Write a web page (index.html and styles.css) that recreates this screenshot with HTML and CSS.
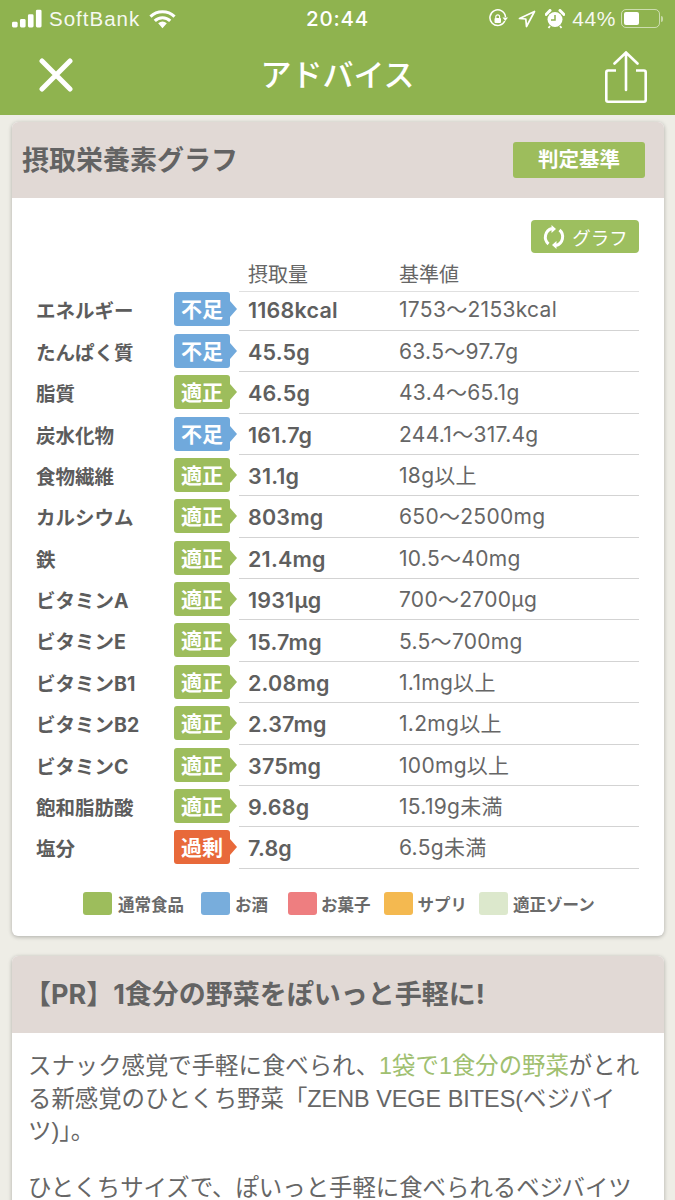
FILE: index.html
```html
<!DOCTYPE html>
<html lang="ja">
<head>
<meta charset="utf-8">
<title>アドバイス</title>
<link rel="stylesheet" href="styles.css">
</head>
<body>
<header class="appbar">
  <div class="status">
    <div class="status-left">
      <svg class="signal" width="30" height="20" viewBox="0 0 32 20"><rect x="0" y="13" width="6" height="6" rx="1.5"/><rect x="8.5" y="10" width="6" height="9" rx="1.5"/><rect x="17" y="5" width="6" height="14" rx="1.5"/><rect x="25.500" y="0" width="6" height="19" rx="1.5"/></svg>
      <span class="carrier">SoftBank</span>
      <svg class="wifi" width="27" height="20" viewBox="0 0 28 20"><path d="M1.500 7.500A18 18 0 0 1 26.500 7.500M6 12a11.500 11.500 0 0 1 16 0" fill="none" stroke="#fff" stroke-width="3.200"/><path d="M9.500 14.500a7 7 0 0 1 9 0L14 19.500z" fill="#fff"/></svg>
    </div>
    <span class="time">20:44</span>
    <div class="status-right">
      <svg width="20" height="20" viewBox="0 0 20 20"><path d="M16.800 12A7.800 7.800 0 1 1 17.500 8" fill="none" stroke="#fff" stroke-width="1.500"/><path d="M14.500 8.500h5.500L17.300 12z" fill="#fff"/><rect x="6.500" y="9" width="6.500" height="5" rx="1" fill="#fff"/><path d="M7.800 9.500V7.800a1.900 1.900 0 0 1 3.800 0v1.700" fill="none" stroke="#fff" stroke-width="1.200"/></svg>
      <svg class="gap-loc" width="18" height="20" viewBox="0 0 18 20"><path d="M16.500 2.500 8.500 17.500 7.800 10 1.500 9.500z" fill="none" stroke="#fff" stroke-width="1.700" stroke-linejoin="round"/></svg>
      <svg class="gap-alarm" width="20" height="20" viewBox="0 0 20 20"><circle cx="10" cy="10.500" r="7.500" fill="#fff"/><path d="M10 6v5H6" fill="none" stroke="#8fb34f" stroke-width="1.500"/><path d="M1 5.500 5 1.500M15 1.500l4 4" stroke="#fff" stroke-width="3" stroke-linecap="round"/><path d="M5 17l-1.500 2M15 17l1.500 2" stroke="#fff" stroke-width="1.800"/></svg>
      <span class="battery-text">44%</span>
      <div class="battery"><span class="battery-fill"></span></div><span class="battery-cap"></span>
    </div>
  </div>
  <div class="nav">
    <svg class="close" width="34" height="34" viewBox="0 0 34 34"><path d="M3 3 31 31M31 3 3 31" stroke="#fff" stroke-width="5" stroke-linecap="round"/></svg>
    <h1 class="title">アドバイス</h1>
    <svg class="share" width="42" height="52" viewBox="0 0 42 52"><path d="M11 19.500H3a1.700 1.700 0 0 0-1.700 1.700V49a1.700 1.700 0 0 0 1.700 1.700h36a1.700 1.700 0 0 0 1.700-1.700V21.200a1.700 1.700 0 0 0-1.700-1.700H31" fill="none" stroke="#fff" stroke-width="2.600"/><path d="M21 39V2M9.500 12.500 21 1.500 32.500 12.500" fill="none" stroke="#fff" stroke-width="2.600" stroke-linecap="round"/></svg>
  </div>
</header>

<main class="content">
  <section class="card">
    <div class="card-head">
      <h2 class="card-title">摂取栄養素グラフ</h2>
      <span class="criteria">判定基準</span>
    </div>
    <div class="graph-body">
      <div class="toggle-row">
        <span class="toggle">
          <svg width="24" height="24" viewBox="0 0 24 24"><path d="M10 3.500A9 9 0 0 0 6.500 19M14 20.500A9 9 0 0 0 17.500 5" fill="none" stroke="#fff" stroke-width="3"/><path d="M9.500 0v8L14 4zM14.500 24v-8L10 20z" fill="#fff"/></svg>
          グラフ
        </span>
      </div>
      <div class="col-heads">
        <span class="col-a">摂取量</span>
        <span class="col-b">基準値</span>
      </div>
      <div class="rows">
        <div class="row"><span class="name">エネルギー</span><span class="badge low">不足</span><div class="cell"><b class="val">1168kcal</b><span class="ref">1753～2153kcal</span></div></div>
        <div class="row"><span class="name">たんぱく質</span><span class="badge low">不足</span><div class="cell"><b class="val">45.5g</b><span class="ref">63.5～97.7g</span></div></div>
        <div class="row"><span class="name">脂質</span><span class="badge ok">適正</span><div class="cell"><b class="val">46.5g</b><span class="ref">43.4～65.1g</span></div></div>
        <div class="row"><span class="name">炭水化物</span><span class="badge low">不足</span><div class="cell"><b class="val">161.7g</b><span class="ref">244.1～317.4g</span></div></div>
        <div class="row"><span class="name">食物繊維</span><span class="badge ok">適正</span><div class="cell"><b class="val">31.1g</b><span class="ref">18g以上</span></div></div>
        <div class="row"><span class="name">カルシウム</span><span class="badge ok">適正</span><div class="cell"><b class="val">803mg</b><span class="ref">650～2500mg</span></div></div>
        <div class="row"><span class="name">鉄</span><span class="badge ok">適正</span><div class="cell"><b class="val">21.4mg</b><span class="ref">10.5～40mg</span></div></div>
        <div class="row"><span class="name">ビタミンA</span><span class="badge ok">適正</span><div class="cell"><b class="val">1931µg</b><span class="ref">700～2700µg</span></div></div>
        <div class="row"><span class="name">ビタミンE</span><span class="badge ok">適正</span><div class="cell"><b class="val">15.7mg</b><span class="ref">5.5～700mg</span></div></div>
        <div class="row"><span class="name">ビタミンB1</span><span class="badge ok">適正</span><div class="cell"><b class="val">2.08mg</b><span class="ref">1.1mg以上</span></div></div>
        <div class="row"><span class="name">ビタミンB2</span><span class="badge ok">適正</span><div class="cell"><b class="val">2.37mg</b><span class="ref">1.2mg以上</span></div></div>
        <div class="row"><span class="name">ビタミンC</span><span class="badge ok">適正</span><div class="cell"><b class="val">375mg</b><span class="ref">100mg以上</span></div></div>
        <div class="row"><span class="name">飽和脂肪酸</span><span class="badge ok">適正</span><div class="cell"><b class="val">9.68g</b><span class="ref">15.19g未満</span></div></div>
        <div class="row"><span class="name">塩分</span><span class="badge over">過剰</span><div class="cell"><b class="val">7.8g</b><span class="ref">6.5g未満</span></div></div>
      </div>
      <div class="legend">
        <span class="swatch s-food"></span><span class="lg lg-food">通常食品</span>
        <span class="swatch s-drink"></span><span class="lg lg-drink">お酒</span>
        <span class="swatch s-sweet"></span><span class="lg lg-sweet">お菓子</span>
        <span class="swatch s-supp"></span><span class="lg lg-supp">サプリ</span>
        <span class="swatch s-zone"></span><span class="lg">適正ゾーン</span>
      </div>
    </div>
  </section>

  <section class="card">
    <div class="card-head pr-head">
      <h2 class="card-title pr">【PR】1食分の野菜をぽいっと手軽に!</h2>
    </div>
    <div class="article">
      <p>スナック感覚で手軽に食べられ、<span class="hl">1袋で1食分の野菜</span>がとれる新感覚のひとくち野菜「ZENB VEGE BITES(ベジバイツ)」。</p>
      <p>ひとくちサイズで、ぽいっと手軽に食べられるベジバイツ</p>
    </div>
  </section>
</main>
</body>
</html>
```

FILE: styles.css
```css
* { box-sizing: border-box; }
html, body { margin: 0; height: 1200px; overflow: hidden; }
body {
  background: #eeede6;
  color: #5f5f5f;
  font-family: "Inter", "Noto Sans CJK JP", sans-serif;
}
h1, h2, p { margin: 0; }

.appbar { background: #8fb34f; height: 115px; color: #fff; }
.status {
  height: 37px;
  padding: 0 12px 0 12px;
  display: grid;
  grid-template-columns: 1fr auto 1fr;
  align-items: center;
}
.status-left, .status-right { display: flex; align-items: center; }
.status-right { justify-content: flex-end; }
.signal { fill: #fff; margin-right: 7px; }
.carrier { font-size: 20.500px; font-family: "Liberation Sans", sans-serif; letter-spacing: 1px; opacity: .92; }
.wifi { margin-left: 9px; }
.time { font-size: 20.500px; font-weight: 500; letter-spacing: .8px; }
.gap-loc { margin-left: 10px; }
.gap-alarm { margin-left: 9px; }
.battery-text { font-size: 21px; font-family: "Liberation Sans", sans-serif; margin-left: 7px; letter-spacing: .6px; opacity: .92; }
.battery {
  width: 39px; height: 19px; margin-left: 5px; padding: 2px;
  border: 1px solid rgba(255,255,255,.55); border-radius: 5px;
}
.battery-fill { display: block; width: 15px; height: 13px; background: #fff; border-radius: 2px; }
.battery-cap { width: 2px; height: 6px; margin-left: 1px; background: rgba(255,255,255,.5); border-radius: 0 2px 2px 0; }

.nav {
  height: 78px;
  padding: 0 28px 0 39px;
  display: flex;
  align-items: center;
  justify-content: space-between;
}
.close { margin-bottom: 3px; }
.share { margin-top: 1px; }
.title { font-size: 31px; font-weight: 500; line-height: 40px; margin-bottom: 7px; margin-right: 3px; font-family: "Noto Sans CJK JP", sans-serif; }

.content { padding: 7px 11px 0 12px; display: flex; flex-direction: column; gap: 20px; }
.card {
  background: #fff;
  border-radius: 6px;
  box-shadow: 0 1px 4px rgba(0,0,0,.28);
  overflow: hidden;
  flex: none;
}
.card-head {
  background: #e1d9d5;
  height: 76px;
  padding: 0 19px 0 10px;
  display: flex;
  align-items: center;
  justify-content: space-between;
}
.pr-head { height: 77px; }
.card-title { font-size: 27px; font-weight: 700; color: #636363; line-height: 36px; margin-top: 2px; }
.card-title.pr { font-size: 27px; white-space: nowrap; margin-left: 2px; margin-top: 0; }
.criteria {
  width: 132px; height: 36px;
  background: #9dbd5c; color: #fff;
  border-radius: 3px;
  font-size: 20.500px; font-weight: 700; line-height: 36px; text-align: center;
  margin-bottom: 1px;
}

.graph-body { height: 738px; padding: 22px 25px 0 24px; }
.toggle-row { display: flex; justify-content: flex-end; height: 32px; }
.toggle {
  width: 108px; height: 33px;
  background: #9dbf5f; color: #fff;
  border-radius: 4px;
  font-size: 18.500px;
  display: flex; align-items: center; justify-content: center; gap: 6px;
}
.col-heads { display: flex; height: 39px; padding-top: 9px; font-size: 20px; line-height: 28px; color: #666; }
.col-a { margin-left: 212px; width: 151px; }

.row { display: flex; height: 41.380px; align-items: stretch; }
.row:first-child { height: 39.800px; }
.name {
  width: 138px; flex: none;
  font-size: 19.500px; font-weight: 700;
  color: #5c5c5c;
  line-height: 44px;
}
.row:first-child .name { line-height: 40px; }
.badge {
  position: relative;
  width: 56px; height: 34px; flex: none;
  margin-top: 3px;
  border-radius: 3px;
  color: #fff;
  font-size: 21px; font-weight: 700; line-height: 36px; text-align: center;
}
.row:first-child .badge { margin-top: 1px; }
.badge::after {
  content: "";
  position: absolute; left: 100%; top: 9px;
  border-left: 7px solid; border-top: 8px solid transparent; border-bottom: 8px solid transparent;
  border-left-color: inherit;
}
.low { background: #70a9dc; border-color: #70a9dc; }
.ok { background: #9dbd5c; border-color: #9dbd5c; }
.over { background: #e8693a; border-color: #e8693a; }
.cell {
  flex: 1;
  margin-left: 9px;
  border-bottom: 1px solid #d3d3d3;
  display: flex; align-items: center;
  padding: 2px 0 0 9px;
  font-size: 21px;
  letter-spacing: .3px;
  line-height: 28px;
}
.row:first-child .cell { box-shadow: inset 0 1px 0 #e0e0e0; padding-top: 0; }
.val { width: 151px; flex: none; font-weight: 600; font-size: 21.500px; letter-spacing: .2px; color: #5f5f5f; }
.ref { color: #666; }

.legend { display: flex; align-items: center; height: 24px; margin-top: 23px; padding-left: 47px; font-size: 16.500px; font-weight: 700; color: #6a6a6a; }
.swatch { width: 29px; height: 23px; border-radius: 3px; flex: none; }
.s-food { background: #9dbd5c; }
.s-drink { background: #78addc; }
.s-sweet { background: #ee7e80; }
.s-supp { background: #f4b950; }
.s-zone { background: #dce8cc; }
.lg { margin-left: 5px; white-space: nowrap; }
.lg-food { margin-left: 6px; margin-right: 17px; }
.lg-drink { margin-right: 20px; }
.lg-sweet { margin-left: 4px; margin-right: 13px; }
.lg-supp { margin-right: 12px; }

.article { padding: 17px 16px 0; font-size: 23.400px; line-height: 32.500px; color: #666; font-family: "Liberation Sans", "Noto Sans CJK JP", sans-serif; }
.article p { margin-bottom: 24.500px; }
.hl { color: #a0c070; }
```
